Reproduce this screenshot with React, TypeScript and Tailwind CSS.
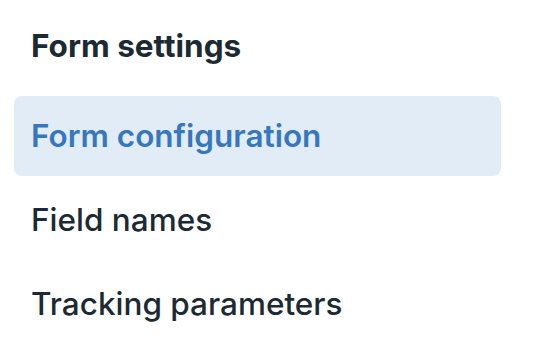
const items = [
  { label: 'Form configuration', active: true },
  { label: 'Field names', active: false },
  { label: 'Tracking parameters', active: false },
]

export default function App() {
  return (
    <div className="w-[538px] h-[356px] bg-white font-['Inter',sans-serif] text-[#1c2b33]">
      <div className="pl-[14px] w-[501px]">
        {/* Section title */}
        <div className="h-[96px] flex items-center pl-[17px] pb-[4px]">
          <h2 className="text-[31.5px] font-bold leading-none">Form settings</h2>
        </div>

        <nav className="flex flex-col gap-[4px]">
          {items.map((item) => (
            <button
              key={item.label}
              className={`h-[80px] flex items-center pl-[17px] rounded-[8px] text-left text-[31.5px] leading-none ${
                item.active ? 'bg-[#e2ecf6] text-[#3578be] font-semibold' : 'font-medium'
              }`}
            >
              {item.label}
            </button>
          ))}
        </nav>
      </div>
    </div>
  )
}
